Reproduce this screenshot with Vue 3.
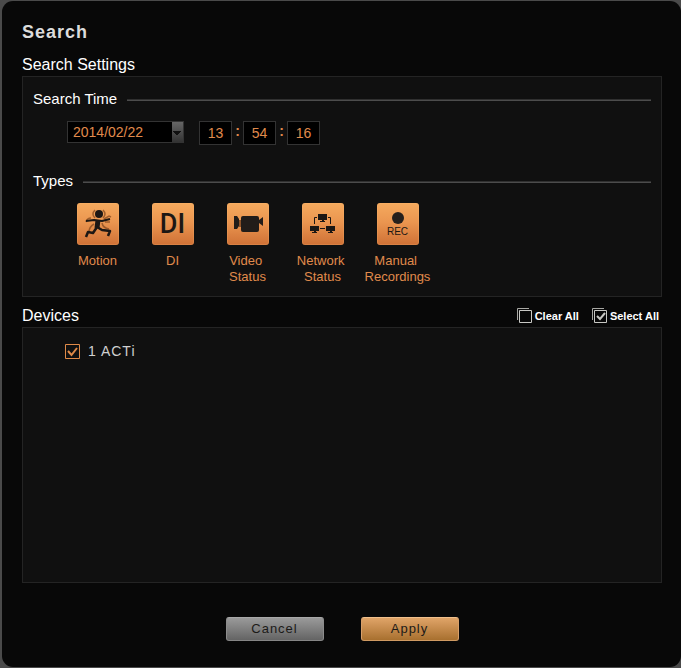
<script setup>
import { ref, reactive } from 'vue'

const date = ref('2014/02/22')
const time = reactive([
  { label: 'Hour', value: '13' },
  { label: 'Minute', value: '54' },
  { label: 'Second', value: '16' },
])
const types = reactive([
  { id: 'motion', label: 'Motion', on: true },
  { id: 'di', label: 'DI', on: true },
  { id: 'video', label: 'Video \nStatus', on: true },
  { id: 'network', label: 'Network \nStatus', on: true },
  { id: 'manual', label: 'Manual \nRecordings', on: true },
])
const devices = reactive([{ id: 1, name: '1 ACTi', checked: true }])

function setAll(value) {
  devices.forEach((d) => { d.checked = value })
}
</script>

<template>
  <main class="dialog">
    <h1 class="title">Search</h1>

    <h2 class="section">Search Settings</h2>
    <section class="panel settings">
      <h3 class="legend">Search Time</h3>
      <div class="when">
        <select v-model="date" class="date" aria-label="Date">
          <option>2014/02/22</option>
        </select>
        <div class="clock">
          <template v-for="(part, i) in time" :key="part.label">
            <span v-if="i" class="colon">:</span>
            <input v-model="part.value" class="digits" type="text" maxlength="2" :aria-label="part.label">
          </template>
        </div>
      </div>

      <h3 class="legend">Types</h3>
      <div class="types">
        <button
          v-for="type in types"
          :key="type.id"
          class="type"
          type="button"
          :aria-pressed="type.on"
          @click="type.on = !type.on"
        >
          <span class="tile" :class="{ off: !type.on }">
            <svg v-if="type.id === 'motion'" viewBox="0 0 42 42" aria-hidden="true">
              <g fill="none" stroke="#7d431b" stroke-width="1.500" opacity=".7">
                <path d="M18 7q-4 4 0 8M26 7q4 4 0 8M14 15q-4 0-5 4M27 16l5-3 2 1M17 21q-5 3-5 8M25 20q1 5 7 6M28 19h5" />
              </g>
              <circle cx="22" cy="11" r="4" fill="#1c1714" />
              <g fill="none" stroke="#1c1714" stroke-linejoin="round">
                <path d="M9 18l8-1 8 1 8-2" stroke-width="2" />
                <path d="M21 17l-1 8" stroke-width="5" />
                <path d="M20 24l-4 6-5-1-2 5" stroke-width="2.500" />
                <path d="M20 24l5 3 8 1-2 5" stroke-width="2.500" />
              </g>
            </svg>
            <span v-else-if="type.id === 'di'" class="di">DI</span>
            <svg v-else-if="type.id === 'video'" viewBox="0 0 42 42" fill="#211c19" aria-hidden="true">
              <path d="M7 13h3l2 3v7l-2 3H7z" />
              <path d="M16 13h14q2 0 2 2v12q0 2-2 2H16q-2 0-2-2V15q0-2 2-2z" />
              <path d="M32 17l4-3v9l-4-3z" />
              <path d="M12 17h2v7h-2z" fill="#8a5128" />
            </svg>
            <svg v-else-if="type.id === 'network'" viewBox="0 0 42 42" fill="#1c1714" aria-hidden="true">
              <path d="M16 11h9v6h-9zM20 17h2v2h-2zM18 18h5v1h-5z" />
              <path d="M8 23h9v5H8zM12 28h2v2h-2zM10 29h5v1h-5z" />
              <path d="M24 23h9v5h-9zM28 28h2v2h-2zM26 29h5v1h-5z" />
              <path d="M15 14.500h-2.500V21M26 14.500h2.500V21M18 25.500h5" fill="none" stroke="#1c1714" />
            </svg>
            <template v-else>
              <span class="dot"></span>
              <span class="rec">REC</span>
            </template>
          </span>
          <span class="caption">{{ type.label }}</span>
        </button>
      </div>
    </section>

    <div class="devices-bar">
      <h2 class="section">Devices</h2>
      <div class="bulk">
        <button type="button" @click="setAll(false)">
          <svg viewBox="0 0 15 15" fill="none" stroke="#c8c8c4" aria-hidden="true">
            <path d="M.5 12V.5H12" stroke="#a8a8a4" />
            <path d="M2.500 2.500h12v12h-12z" />
          </svg>
          Clear All
        </button>
        <button type="button" @click="setAll(true)">
          <svg viewBox="0 0 15 15" fill="none" stroke="#c8c8c4" aria-hidden="true">
            <path d="M.5 12V.5H12" stroke="#a8a8a4" />
            <path d="M2.500 2.500h12v12h-12z" />
            <path d="M5 8l3 3 5-6" stroke-width="2" />
          </svg>
          Select All
        </button>
      </div>
    </div>
    <section class="panel devices">
      <label v-for="device in devices" :key="device.id" class="device">
        <input v-model="device.checked" type="checkbox">
        <svg viewBox="0 0 15 15" fill="none" stroke="#e08a48" aria-hidden="true">
          <path d="M0.500 0.500h14v14h-14z" />
          <path v-if="device.checked" d="M3 7l3.500 4L12 4" stroke-width="2" />
        </svg>
        <span>{{ device.name }}</span>
      </label>
    </section>

    <footer class="actions">
      <button type="button" class="action cancel">Cancel</button>
      <button type="button" class="action apply">Apply</button>
    </footer>
  </main>
</template>

<style>
body {
  background: #4a4a4a;
}

#app {
  display: flex;
  flex-direction: column;
  min-height: 100vh;
}
</style>

<style scoped>
.dialog {
  flex: 1;
  display: flex;
  flex-direction: column;
  box-sizing: border-box;
  margin: 1px 0 1px 2px;
  padding: 20px 19px 26px 20px;
  border-radius: 11px;
  background: #080808;
  color: #fff;
  font-family: "Liberation Sans", Arial, sans-serif;
}

h1,
h2,
h3 {
  margin: 0;
  font-weight: 400;
}

button {
  margin: 0;
  padding: 0;
  border: 0;
  background: none;
  color: inherit;
  font-family: inherit;
  cursor: pointer;
}

svg {
  display: block;
}

.title {
  color: #dcdcdc;
  font-size: 18px;
  font-weight: 700;
  letter-spacing: 1px;
  line-height: 22px;
}

.section {
  font-size: 16px;
  line-height: 22px;
}

.title + .section {
  margin-top: 11px;
}

.panel {
  box-sizing: border-box;
  border: 1px solid #242424;
  background: #101010;
}

.settings {
  padding: 12px 10px 11px;
}

.legend {
  display: flex;
  align-items: center;
  gap: 10px;
  font-size: 15px;
  line-height: 20px;
}

.legend::after {
  content: "";
  flex: 1;
  height: 2px;
  margin-top: 2px;
  background: linear-gradient(#303030 50%, #4c4c4c 50%);
}

.when {
  display: flex;
  align-items: flex-start;
  gap: 15px;
  margin: 12px 0 26px 34px;
}

.date,
.digits {
  box-sizing: border-box;
  margin: 0;
  border: 1px solid #333;
  border-radius: 0;
  background: #000;
  color: #e08b4c;
  font-family: inherit;
  font-size: 14px;
}

.date {
  appearance: none;
  width: 117px;
  height: 22px;
  padding: 0 12px 0 5px;
  background-image:
    linear-gradient(#111, #111),
    linear-gradient(#111, #111),
    linear-gradient(#111, #111),
    linear-gradient(#111, #111),
    linear-gradient(#666, #333);
  background-position: right 2px top 9px, right 3px top 10px, right 4px top 11px, right 5px top 12px, right top;
  background-size: 8px 1px, 6px 1px, 4px 1px, 2px 1px, 11px 100%;
  background-repeat: no-repeat;
}

.clock {
  display: flex;
}

.digits {
  width: 33px;
  height: 24px;
  padding: 0;
  text-align: center;
}

.colon {
  width: 11px;
  color: #e08b4c;
  font-size: 14px;
  font-weight: 700;
  line-height: 20px;
  text-align: center;
}

.types {
  display: grid;
  grid-template-columns: repeat(5, 75px);
  min-height: 82px;
  margin: 12px 0 0 27px;
}

.type {
  display: flex;
  flex-direction: column;
  align-items: center;
  gap: 8px;
}

.tile {
  display: flex;
  flex-direction: column;
  align-items: center;
  justify-content: center;
  width: 42px;
  height: 42px;
  border-radius: 3px;
  background: linear-gradient(#f5aa5e, #eb9650 45%, #cf7136);
  box-shadow: inset 0 0 0 1px rgba(255, 190, 120, 0.2);
  color: #1c1714;
}

.tile.off {
  opacity: 0.4;
}

.tile svg {
  width: 42px;
  height: 42px;
}

.di {
  font-family: Roboto, sans-serif;
  font-size: 27px;
  font-weight: 500;
  line-height: 42px;
}

.dot {
  width: 12px;
  height: 12px;
  margin-top: 2px;
  border-radius: 50%;
  background: #251f1c;
}

.rec {
  margin-top: 2px;
  font-size: 10px;
  line-height: 12px;
}

.caption {
  color: #e08b4c;
  font-size: 13px;
  line-height: 16px;
  text-align: center;
  white-space: pre;
}

.devices-bar {
  display: flex;
  align-items: center;
  justify-content: space-between;
  margin-top: 8px;
}

.bulk {
  display: flex;
  gap: 13px;
  padding-right: 3px;
}

.bulk button {
  display: flex;
  align-items: center;
  gap: 3px;
  font-size: 11px;
  font-weight: 700;
  line-height: 16px;
}

.bulk svg {
  width: 15px;
  height: 15px;
  margin-bottom: 1px;
}

.devices {
  flex: 1;
  padding: 13px 42px;
}

.device {
  display: flex;
  align-items: center;
  gap: 8px;
  color: #d0d0d0;
  font-size: 14px;
  letter-spacing: 1px;
  line-height: 21px;
}

.device input {
  position: absolute;
  width: 15px;
  height: 15px;
  margin: 0;
  opacity: 0;
}

.device svg {
  width: 15px;
  height: 15px;
}

.actions {
  display: flex;
  justify-content: center;
  gap: 37px;
  margin-top: 34px;
}

.action {
  width: 98px;
  height: 24px;
  border: 1px solid;
  border-radius: 3px;
  color: #1c1a18;
  font-size: 13px;
  letter-spacing: 1px;
  line-height: 20px;
}

.cancel {
  border-color: #a8a8a8 #8c8c8c #868686;
  background: linear-gradient(#9a9a9a, #646464);
}

.apply {
  border-color: #f0c08c #d8a06a #cf9a62;
  background: linear-gradient(#e0a468, #a8702f);
}
</style>
